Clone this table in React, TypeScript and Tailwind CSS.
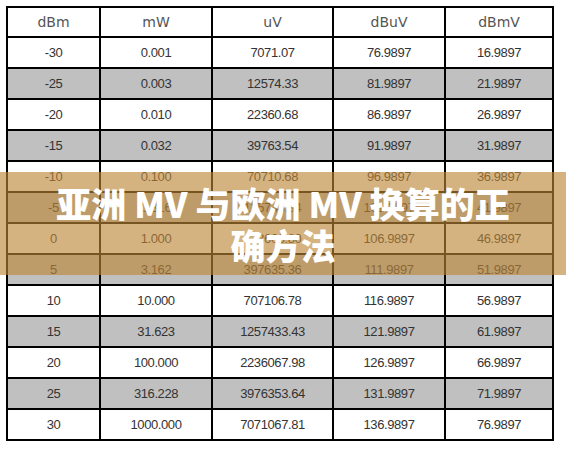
import React from 'react';

const headers = ['dBm', 'mW', 'uV', 'dBuV', 'dBmV'];

const rows: string[][] = [
  ['-30', '0.001', '7071.07', '76.9897', '16.9897'],
  ['-25', '0.003', '12574.33', '81.9897', '21.9897'],
  ['-20', '0.010', '22360.68', '86.9897', '26.9897'],
  ['-15', '0.032', '39763.54', '91.9897', '31.9897'],
  ['-10', '0.100', '70710.68', '96.9897', '36.9897'],
  ['-5', '0.316', '125743.34', '101.9897', '41.9897'],
  ['0', '1.000', '223606.80', '106.9897', '46.9897'],
  ['5', '3.162', '397635.36', '111.9897', '51.9897'],
  ['10', '10.000', '707106.78', '116.9897', '56.9897'],
  ['15', '31.623', '1257433.43', '121.9897', '61.9897'],
  ['20', '100.000', '2236067.98', '126.9897', '66.9897'],
  ['25', '316.228', '3976353.64', '131.9897', '71.9897'],
  ['30', '1000.000', '7071067.81', '136.9897', '76.9897'],
];

export default function App() {
  return (
    <div className="relative w-[566px] h-[449px] bg-white overflow-hidden">
      <div className="pt-[6px] pl-[6px]">
        <div className="grid w-[548px] grid-cols-[91px_110px_119px_110px_106px] grid-rows-[28px] auto-rows-[29px] gap-[2px] bg-black p-[2px]">
          {headers.map(h => (
            <div
              key={h}
              className="flex items-center justify-center bg-white text-[14px] text-[#555] font-['DejaVu_Sans',sans-serif]"
            >
              {h}
            </div>
          ))}
          {rows.map((r, i) =>
            r.map((v, j) => (
              <div
                key={`${i}-${j}`}
                className={`flex items-center justify-center text-[13px] tracking-[-0.4px] text-[#333] font-['Liberation_Sans',sans-serif] ${
                  i % 2 === 1 ? 'bg-[#c0c0c0]' : 'bg-white'
                }`}
              >
                {v}
              </div>
            ))
          )}
        </div>
      </div>

      {/* title banner over the table */}
      <div className="absolute left-0 right-0 top-[172px] h-[103px] bg-[rgba(189,134,55,0.63)] flex items-center justify-center">
        <h1 className="max-w-[465px] text-center text-white font-black text-[35px] leading-[42px] font-['Noto_Sans_CJK_SC','Noto_Sans',sans-serif]">
          亚洲 MV 与欧洲 MV 换算的正确方法
        </h1>
      </div>
    </div>
  );
}
